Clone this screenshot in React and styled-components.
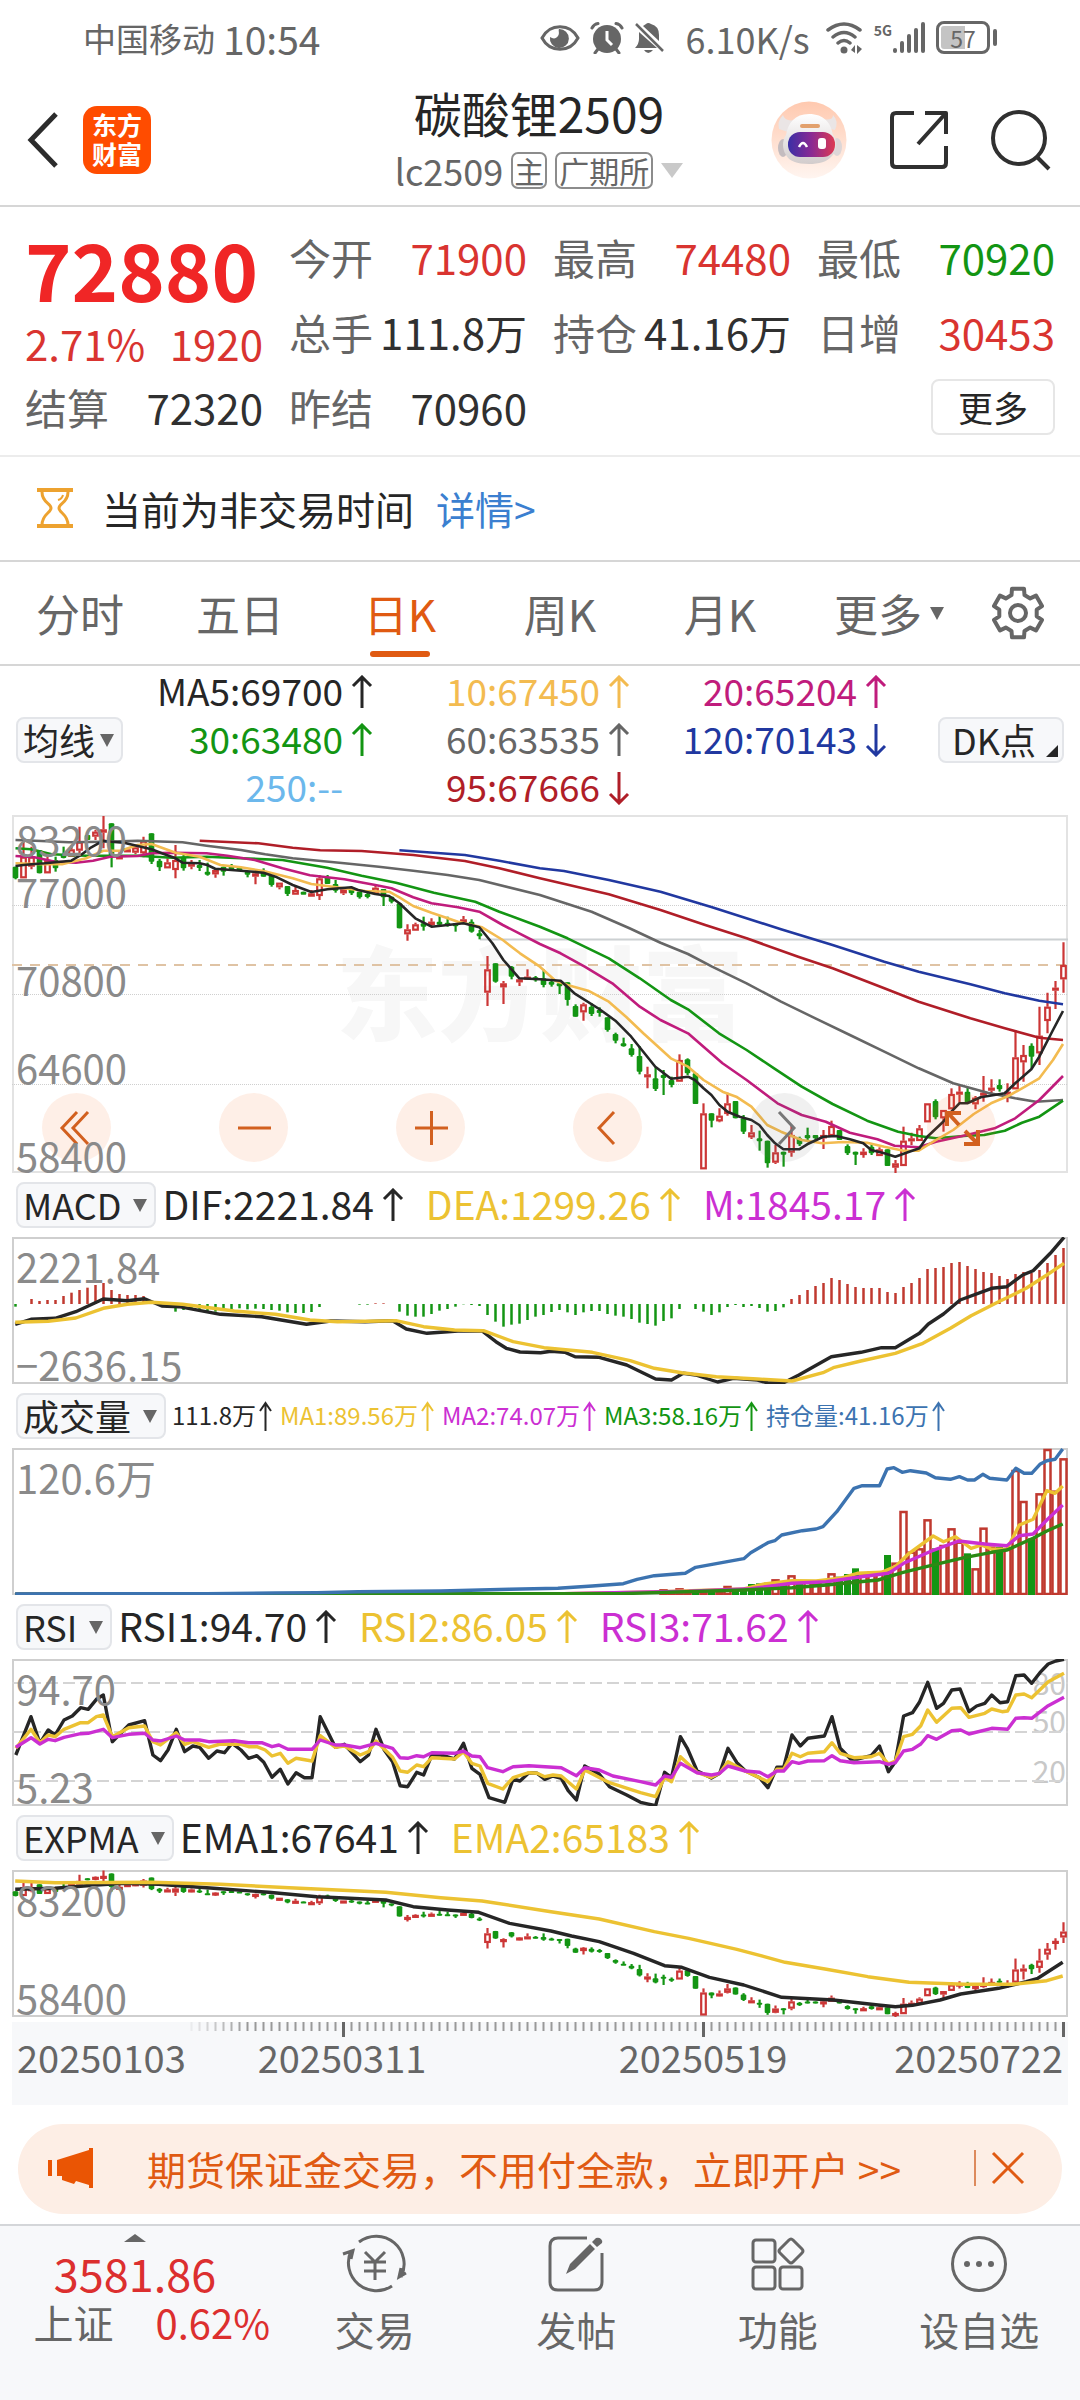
import React from "react";
import styled, { createGlobalStyle, css } from "styled-components";

const c = {
  ink: "#262626",
  grey: "#666666",
  axis: "#8a8a8a",
  red: "#d93430",
  green: "#139513",
  orange: "#e05a12",
  yellow: "#f3bb50",
  gold: "#ecc232",
  magenta: "#c01c7c",
  violet: "#cb2fd2",
  blue: "#2138a0",
  steel: "#3c73b0",
  crimson: "#b01e28",
  sky: "#6cb8ec",
  line: "#d6d6d6",
  panel: "#f7f8fa",
};

const Global = createGlobalStyle`
  *, *::before, *::after { box-sizing: border-box; }
  body { margin: 0; background: #fff; }
  body, button, select {
    font-family: "Noto Sans CJK SC", "Noto Sans", sans-serif;
    color: ${c.ink};
  }
  button, select { border: 0; padding: 0; margin: 0; background: none; font-weight: 400; }
  svg { display: block; flex: none; }
  p, h1, ul { margin: 0; padding: 0; font-weight: 400; list-style: none; }
`;

/* ---------- market data, in chart grid units ---------- */

// direction, body top, body bottom, high, low
const candles = `g170,205,170,208 r140,205,90,205 r140,170,110,178 g120,190,120,190 r150,190,135,190 g150,175,140,185
g135,140,110,145 r118,140,105,140 r95,122,50,130 g75,90,75,90 r65,80,60,90 r58,68,18,115 g40,140,40,172 r138,148,120,148
r118,125,118,125 r112,128,112,133 r92,130,80,142 g70,155,70,162 g152,172,147,183 r157,175,145,175 r150,180,105,205
g140,175,130,182 r157,170,150,178 g165,170,150,183 g185,188,158,197 r180,193,175,203 g170,185,170,197 g168,178,162,178
g172,182,172,182 g185,192,185,202 r190,200,188,223 g185,200,175,200 g195,225,195,230 r218,232,218,238 g228,252,228,258
r240,254,225,254 g245,252,245,252 r250,260,240,260 r205,258,195,270 g202,222,195,222 g222,242,210,248 r238,250,238,255
g238,250,230,255 g245,262,245,266 g252,260,240,265 r233,252,228,252 g237,262,237,288 g260,275,260,280 g280,355,280,355
r358,373,343,392 r343,362,338,362 g340,350,320,362 r335,345,325,350 g335,340,315,348 g338,340,320,350 g340,343,340,365
r328,335,318,340 g335,365,328,368 g370,373,360,388 r478,548,438,588 g460,515,460,518 r520,532,513,582 g470,500,468,508
r508,512,505,528 r500,505,478,505 g502,510,498,515 g505,525,478,532 g515,520,510,530 g520,524,520,552 g517,570,517,587
g588,620,583,620 r583,607,578,632 g590,612,580,618 g600,608,592,620 g622,660,622,665 g672,692,668,700 g700,705,683,710
g715,735,702,740 g738,785,708,793 r793,797,770,835 g805,837,772,843 g795,800,780,855 g810,825,800,832 r750,815,733,815
g748,790,745,795 g790,882,790,882 r910,1078,880,1078 g910,932,910,952 r917,934,895,937 r880,912,848,917 g873,925,873,925
g925,965,915,972 r967,982,945,987 g985,992,962,1022 g992,1060,992,1073 r1027,1058,1005,1062 g1025,1030,1025,1070
r975,1028,945,1040 g985,1003,980,1008 g975,985,953,990 g975,985,975,990 r975,985,960,1017 r948,978,932,978 g960,990,960,990
g1008,1030,1003,1035 g1025,1030,1025,1065 r1025,1035,1015,1043 g1010,1030,1000,1035 r1018,1038,1012,1038 g1018,1068,1018,1068
r1060,1073,1050,1090 r992,1068,950,1068 r985,992,968,1005 r955,993,945,993 r880,937,880,937 g873,922,868,928 r900,925,900,965
r852,898,835,898 r845,852,828,880 g845,878,832,878 r863,883,858,898 r848,855,798,875 r833,840,808,855 g825,838,808,845
r845,850,820,877 r742,838,662,838 r735,757,705,815 g707,740,700,775 r677,730,590,765 r590,633,548,670 r533,540,513,597
r465,508,397,548`
  .split(/\s+/)
  .map((s) => {
    const [top, bottom, high, low] = s.slice(1).split(",").map((n) => Number(n) / 3 - 5);
    return { up: s[0] === "r", top, bottom, high, low };
  });

const averages = [
  [c.blue, "1160,121 1350,135 1450,152 1568,175 1638,183 1768,210 1918,245 2068,292 2268,358 2418,405 2568,455 2668,485 2818,523 2918,550 3018,572 3087,583"],
  [c.crimson, "580,92 750,100 850,113 930,121 1050,123 1200,135 1350,153 1450,175 1568,205 1768,253 1918,300 2048,345 2168,385 2318,440 2418,475 2568,535 2668,575 2818,625 2918,655 3018,683 3087,690"],
  [c.grey, "45,90 120,93 200,97 300,95 400,92 530,97 600,107 700,120 770,133 850,145 1000,160 1100,170 1200,182 1300,195 1392,210 1568,255 1718,305 1828,355 1918,398 1998,432 2068,470 2168,520 2268,575 2368,625 2468,675 2568,725 2668,775 2768,820 2868,848 2948,865 3008,875 3087,870"],
  [c.green, "45,115 90,118 150,133 250,137 400,137 500,143 600,140 700,145 820,150 950,173 1050,197 1150,218 1260,248 1380,275 1450,305 1568,350 1648,385 1768,445 1858,505 1948,570 1998,598 2088,670 2168,720 2248,775 2328,830 2418,882 2518,932 2608,965 2668,978 2718,985 2808,977 2858,975 2918,962 2968,938 3018,920 3087,872"],
  [c.magenta, "45,138 100,142 160,155 220,158 270,152 320,140 400,138 440,130 500,128 600,130 660,137 740,150 820,175 900,196 1000,208 1090,225 1137,235 1200,262 1253,280 1330,292 1392,305 1460,345 1568,402 1628,430 1698,470 1778,520 1858,590 1918,630 1998,670 2098,760 2168,810 2258,880 2328,915 2398,935 2468,968 2548,988 2598,1007 2668,1012 2718,995 2808,975 2888,955 2948,925 3018,870 3087,798"],
  [c.yellow, "45,160 130,163 180,163 250,145 300,122 350,122 400,105 440,102 480,117 510,128 580,140 640,165 700,172 765,183 850,205 904,222 1000,235 1060,243 1130,245 1160,262 1200,288 1253,308 1330,335 1400,352 1460,390 1510,430 1568,470 1613,512 1648,525 1708,542 1768,575 1818,620 1868,670 1948,745 1998,770 2043,810 2098,845 2138,860 2182,890 2228,945 2268,965 2328,990 2388,1000 2448,996 2518,998 2568,1010 2624,1022 2668,1022 2718,990 2768,960 2828,912 2878,880 2928,858 2968,835 3018,805 3058,750 3087,702"],
  [c.ink, "45,168 68,165 91,163 130,160 207,152 235,135 265,112 300,92 323,95 360,98 400,108 440,118 470,130 510,145 530,158 580,160 602,165 625,176 700,182 765,188 800,200 850,225 904,246 951,238 1020,232 1040,240 1090,252 1130,258 1160,280 1206,325 1253,350 1300,345 1346,340 1392,352 1430,400 1462,450 1508,505 1568,508 1628,512 1668,550 1740,597 1787,632 1833,680 1903,770 1949,806 1998,800 2018,810 2043,835 2066,855 2089,885 2113,905 2148,920 2182,930 2205,945 2228,975 2251,1000 2275,1018 2321,1018 2344,1003 2391,980 2428,978 2468,988 2507,1000 2530,1020 2568,1030 2600,1040 2628,1030 2670,1015 2693,980 2739,935 2763,905 2786,880 2809,880 2848,862 2918,850 2948,820 2995,778 3018,740 3058,660 3087,603"],
];

const macdBars = "380 372 357 363 360 360 348 338 330 323 315 309 330 342 345 345 348 365 378 383 395 390 390 390 395 395 393 387 385 388 386 387 390 392 397 399 399 396 381 372 372 372 372 374 374 370 370 372 395 407 410 410 402 392 387 380 373 375 378 405 425 440 434 431 420 410 405 396 390 397 405 397 393 393 402 407 410 417 428 432 437 423 415 387 372 387 395 405 397 381 375 381 378 384 395 393 382 357 345 330 318 309 294 300 312 321 324 324 324 336 339 321 309 294 267 264 261 249 246 258 267 276 279 288 297 282 276 279 270 249 225 204"
  .split(" ")
  .map(Number);

const macdLines = [
  [c.ink, "22,433 45,418 80,415 110,395 128,378 150,357 185,362 210,356 235,378 260,380 320,403 380,410 445,433 480,423 530,425 570,422 590,447 620,460 670,452 700,453 720,485 735,505 755,516 785,518 800,514 820,517 835,530 870,532 910,555 952,597 975,600 992,580 1010,585 1042,606 1065,595 1100,600 1115,609 1138,608 1160,585 1207,530 1250,517 1280,503 1300,503 1335,460 1348,432 1370,402 1394,360 1440,325 1462,320 1485,285 1500,272 1525,220 1545,172"],
  [c.gold, "22,427 70,424 110,414 150,385 185,373 220,367 265,373 340,393 400,403 450,420 490,425 575,422 615,440 660,450 702,452 745,485 790,503 860,517 915,542 950,565 990,578 1040,590 1100,597 1150,603 1195,578 1210,563 1250,543 1300,520 1340,490 1380,445 1410,407 1450,365 1490,325 1520,285 1545,250"],
];

const volumeBars = "r478 r485 r475 r488 g487 r485 g485 r485 r468 g482 g480 g462 g460 g458 r448 g460 r436 g458 r455 r460 r452 r430 g440 g432 g415 r430 r425 r427 g375 r398 r243 r365 r355 r268 g355 r345 r295 r335 g370 r415 r293 r350 g350 r357 r120 r213 g325 r190 r57 r182 r85"
  .split(" ")
  .map((s) => ({ up: s[0] === "r", top: Number(s.slice(1)) / 3 - 18 }));

const volumeLines = [
  [c.gold, "22,493 800,492 950,486 1080,477 1110,462 1150,452 1185,453 1220,445 1245,430 1280,427 1300,410 1320,370 1355,318 1370,335 1387,320 1410,355 1425,345 1440,358 1462,358 1480,285 1500,268 1520,182 1532,190 1543,168"],
  [c.violet, "22,493 800,492 1000,484 1090,476 1150,460 1200,455 1250,440 1290,430 1312,400 1350,365 1392,333 1430,342 1462,347 1480,317 1500,312 1520,270 1543,225"],
  ["#2c8a14", "22,493 900,491 1080,480 1150,473 1200,465 1275,450 1310,428 1345,410 1400,383 1440,367 1462,360 1500,325 1520,303 1543,282"],
  [c.steel, "22,492 150,491 300,491 400,489 460,488 520,485 640,483 740,478 810,475 860,468 905,461 925,448 950,437 995,430 1010,412 1080,386 1090,368 1115,338 1125,332 1135,315 1165,302 1185,297 1195,290 1215,245 1240,175 1252,167 1277,167 1288,117 1298,113 1310,127 1322,122 1345,129 1358,143 1380,148 1393,140 1405,150 1415,150 1427,133 1437,145 1462,150 1475,115 1487,130 1498,130 1510,103 1520,92 1532,88 1543,57"],
];

const rsiLines = [
  [c.ink, "23,345 45,230 58,310 70,270 80,285 93,240 105,228 117,203 128,208 140,178 150,165 163,305 187,255 210,242 222,345 233,362 244,330 256,268 268,335 280,318 290,322 303,355 315,333 326,338 337,310 350,330 361,355 373,347 383,367 395,412 407,388 418,432 430,398 442,413 453,413 465,230 487,322 500,313 523,365 535,345 546,268 558,330 570,365 581,437 592,440 605,397 615,405 627,345 640,345 660,357 673,310 685,385 697,403 710,473 733,487 745,417 755,423 768,398 780,400 791,418 803,408 815,415 825,452 837,480 849,378 870,402 885,440 910,465 930,487 952,497 965,397 975,413 988,290 998,325 1012,392 1033,414 1045,400 1057,325 1070,368 1082,392 1103,413 1115,443 1128,382 1138,382 1150,285 1162,318 1173,295 1197,288 1208,230 1220,325 1235,357 1245,357 1265,347 1277,318 1290,395 1300,365 1312,228 1325,218 1335,187 1347,127 1360,205 1370,190 1382,150 1394,147 1407,215 1418,198 1430,190 1440,165 1452,188 1463,185 1475,107 1487,105 1498,130 1510,98 1522,72 1533,63 1545,58"],
  [c.gold, "23,325 45,268 58,308 70,285 80,290 93,268 117,248 128,248 140,230 150,225 163,290 187,263 210,258 222,305 233,315 256,278 268,313 280,305 303,322 320,312 350,313 361,320 373,320 385,330 395,348 407,340 418,370 430,355 453,363 465,287 487,322 500,318 523,345 535,335 546,303 570,352 581,393 592,397 605,375 615,380 627,353 660,357 673,335 685,370 697,378 708,430 730,447 745,413 768,398 780,400 791,410 803,405 815,408 837,447 849,390 885,428 930,458 952,470 965,412 975,425 988,350 1012,397 1033,412 1045,400 1057,365 1082,393 1115,425 1128,388 1138,388 1150,340 1162,350 1173,340 1197,335 1208,308 1220,340 1240,353 1265,350 1277,340 1290,372 1300,363 1312,290 1325,283 1337,257 1347,210 1360,247 1382,205 1395,203 1407,232 1430,220 1440,207 1455,215 1463,213 1475,165 1487,162 1498,173 1522,125 1545,100"],
  [c.violet, "23,322 45,293 58,312 70,298 80,302 93,292 117,281 128,280 150,268 163,293 187,283 210,280 222,300 233,303 256,288 268,300 290,300 303,305 340,302 361,308 380,308 395,320 405,315 418,328 453,328 465,300 487,315 500,315 523,323 546,310 570,325 581,353 592,355 605,347 615,350 627,338 660,340 673,333 685,348 697,350 708,383 730,395 745,380 768,377 815,383 837,407 849,383 870,390 890,408 930,425 952,435 965,408 975,412 988,370 1012,398 1033,405 1045,400 1057,378 1082,393 1103,397 1115,410 1128,393 1138,393 1150,365 1160,370 1173,363 1197,362 1208,347 1220,362 1240,368 1277,365 1290,373 1300,368 1312,333 1325,328 1337,312 1347,287 1360,298 1382,272 1395,270 1407,282 1440,265 1463,268 1475,235 1487,233 1498,235 1522,197 1545,172"],
];

const emaLines = [
  [c.ink, "22,118 80,115 140,105 180,100 230,103 300,113 390,127 460,140 500,144 560,150 600,170 650,180 695,187 740,220 800,243 830,258 870,275 920,310 965,347 990,352 1030,382 1080,405 1135,442 1210,450 1275,465 1300,470 1325,466 1365,450 1395,432 1450,415 1490,395 1507,385 1543,337"],
  [c.gold, "22,93 80,98 220,97 320,103 420,113 560,127 640,143 700,153 800,185 870,207 950,245 1000,265 1070,298 1140,337 1200,358 1260,380 1320,397 1400,403 1470,403 1520,392 1543,378"],
];

const barX = (i) => 3.5 + 8 * i;

const project = (points, scaleX, top) =>
  points
    .split(" ")
    .map((p) => {
      const [x, y] = p.split(",").map(Number);
      return `${(x / scaleX - 12).toFixed(1)},${(y / 3 - top).toFixed(1)}`;
    })
    .join(" ");

/* ---------- chart drawings ---------- */

const ChartSvg = styled.svg`
  width: 100%;
  height: 100%;
  overflow: hidden;
`;

function Lines({ lines, scaleX = 1.452, top, width = 3.4 }) {
  return lines.map(([colour, points]) => (
    <polyline
      key={colour}
      points={project(points, scaleX, top)}
      fill="none"
      stroke={colour}
      strokeWidth={width}
      strokeLinejoin="round"
    />
  ));
}

function Candles({ ratio = 1 }) {
  const minBody = ratio === 1 ? 3 : 2;
  return candles.map((k, i) => {
    const x = barX(i);
    const y = k.top * ratio;
    const h = Math.max(minBody, (k.bottom - k.top) * ratio);
    const high = k.high * ratio;
    const low = k.low * ratio;
    return k.up ? (
      <g key={i} stroke="#cc3636" strokeWidth="2.2" fill="none">
        <path d={`M${x} ${high}V${y}M${x} ${y + h}V${Math.max(low, y + h)}`} />
        <rect x={x - 2.3} y={y + 1} width="4.6" height={Math.max(1, h - 2)} />
      </g>
    ) : (
      <g key={i} fill={c.green}>
        <rect x={x - 1} y={high} width="2.200" height={Math.max(1, low - high)} />
        <rect x={x - 2.8} y={y} width="5.6" height={h} rx="1" />
      </g>
    );
  });
}

function PriceChart() {
  return (
    <ChartSvg viewBox="0 0 1056 358" preserveAspectRatio="none" aria-hidden="true">
      {[90.5, 179.5, 269.5].map((y) => (
        <path key={y} d={`M0 ${y}H1056`} stroke="#cfcfcf" strokeDasharray="1 1" />
      ))}
      <path d="M468 124.5H1056" stroke="#ccd0d2" strokeWidth="2" />
      <path d="M0 150H1056" stroke="#dfc3a4" strokeWidth="2" strokeDasharray="10 8" />
      <Candles />
      <Lines lines={averages} scaleX={2.904} top={5} width={2.6} />
    </ChartSvg>
  );
}

function MacdChart() {
  return (
    <ChartSvg viewBox="0 0 1056 147" preserveAspectRatio="none" aria-hidden="true">
      {macdBars.map((v, i) => (
        <path
          key={i}
          d={`M${barX(i)} 67V${v / 3 - 57}`}
          stroke={v < 372 ? "#c0392f" : c.green}
          strokeWidth="2.500"
        />
      ))}
      <Lines lines={macdLines} top={57} />
    </ChartSvg>
  );
}

function VolumeChart() {
  return (
    <ChartSvg viewBox="0 0 1056 147" preserveAspectRatio="none" aria-hidden="true">
      {volumeBars.map((b, i) => {
        const x = barX(i + 81);
        return b.up ? (
          <rect key={i} x={x - 3} y={b.top + 1} width="6" height={Math.max(1, 145 - b.top)} fill="#fff" stroke="#c0392f" strokeWidth="2.500" />
        ) : (
          <rect key={i} x={x - 3.5} y={b.top} width="7" height={147 - b.top} fill={c.green} />
        );
      })}
      <Lines lines={volumeLines} top={18} />
    </ChartSvg>
  );
}

function RsiChart() {
  return (
    <ChartSvg viewBox="0 0 1056 147" preserveAspectRatio="none" aria-hidden="true">
      {[24, 73, 122].map((y) => (
        <path key={y} d={`M0 ${y}H1056`} stroke="#d4d4d4" strokeWidth="2" strokeDasharray="12 5" />
      ))}
      <Lines lines={rsiLines} top={19} />
    </ChartSvg>
  );
}

function ExpmaChart() {
  return (
    <ChartSvg viewBox="0 0 1056 147" preserveAspectRatio="none" aria-hidden="true">
      <Candles ratio={147 / 358} />
      <Lines lines={emaLines} top={20} />
    </ChartSvg>
  );
}

function Ticks() {
  return (
    <TickSvg viewBox="0 0 1056 15" preserveAspectRatio="none" aria-hidden="true">
      {Array.from({ length: 110 }, (_, n) => {
        const i = n + 22;
        const long = i === 41 || i === 86 || i === 131;
        return (
          <path
            key={i}
            d={`M${barX(i)} 0V${long ? 15 : 9}`}
            stroke={long ? c.grey : "#999"}
            strokeWidth={long ? 3 : 2}
            opacity={Math.min(1, (n + 1) / 8)}
          />
        );
      })}
    </TickSvg>
  );
}

/* ---------- icons ---------- */

const Arrow = ({ down, small }) => (
  <svg
    width={small ? 13 : 22}
    height={small ? 30 : 34}
    viewBox={small ? "0 0 13 30" : "0 0 22 34"}
    fill="none"
    stroke="currentColor"
    strokeWidth={small ? 2 : 3}
    aria-hidden="true"
  >
    {small ? (
      <path d="M6.500 30V2M1 10L6.500 2L12 10" />
    ) : (
      <path d={down ? "M11 1V32M2 23L11 32L20 23" : "M11 33V2M2 11L11 2L20 11"} />
    )}
  </svg>
);

const Triangle = ({ w = 14, h = 13, colour = c.grey }) => (
  <svg width={w} height={h} viewBox="0 0 14 13" preserveAspectRatio="none" aria-hidden="true">
    <path d="M0 0H14L7 13Z" fill={colour} />
  </svg>
);

const EyeIcon = () => (
  <svg width="40" height="28" viewBox="0 0 40 28" aria-hidden="true">
    <path d="M2 14C10-1 30-1 38 14C30 29 10 29 2 14Z" fill="none" stroke={c.grey} strokeWidth="3" />
    <path d="M19 5A9.500 9.500 0 1 1 10 13C13 15 16 15 18 12C20 9 18 7 19 5Z" fill={c.grey} />
  </svg>
);

const AlarmIcon = () => (
  <svg width="34" height="32" viewBox="0 0 34 32" aria-hidden="true">
    <circle cx="17" cy="17" r="14" fill={c.grey} />
    <path d="M2 6Q4 2 8 1.500M32 6Q30 2 26 1.500M5 31L8 27M29 31L26 27" fill="none" stroke={c.grey} strokeWidth="3" strokeLinecap="round" />
    <path d="M17 9V18L22 23" fill="none" stroke="#fff" strokeWidth="3" />
  </svg>
);

const BellOffIcon = () => (
  <svg width="30" height="32" viewBox="0 0 30 32" aria-hidden="true">
    <path d="M9 4L12 2Q14 0 17 2Q25 4 25 13V19ZM5 10L23 26H1Q5 22 5 17Z" fill={c.grey} />
    <path d="M2 2L29 29" stroke={c.grey} strokeWidth="2.500" />
    <path d="M10 28H19Q14 34 10 28Z" fill={c.grey} />
  </svg>
);

const WifiIcon = () => (
  <svg width="38" height="32" viewBox="0 0 38 32" aria-hidden="true">
    <g fill="none" stroke={c.grey} strokeWidth="3.500" strokeLinecap="round">
      <path d="M2 8Q18-4 34 8M7 15Q18 6 29 15M12 21Q18 16 24 21" />
    </g>
    <circle cx="18" cy="28" r="3.500" fill={c.grey} />
    <path d="M25 28L29 23V31ZM36 27L31 23V32Z" fill={c.grey} />
  </svg>
);

const SignalIcon = () => (
  <svg width="34" height="32" viewBox="0 0 34 32" fill={c.grey} aria-hidden="true">
    <rect x="1" y="26" width="4" height="5" rx="2" />
    <rect x="8" y="19" width="4" height="12" rx="2" />
    <rect x="15" y="12" width="4" height="19" rx="2" />
    <rect x="22" y="6" width="4" height="25" rx="2" />
    <rect x="29" y="0" width="4" height="31" rx="2" />
  </svg>
);

const BackIcon = () => (
  <svg width="32" height="56" viewBox="0 0 32 56" fill="none" stroke="#2c2c2c" strokeWidth="5" aria-hidden="true">
    <path d="M29 2L4 28L29 54" />
  </svg>
);

const RobotIcon = () => (
  <svg width="76" height="78" viewBox="0 0 76 78" aria-hidden="true">
    <defs>
      <linearGradient id="halo" x1="0" y1="0" x2="0" y2="1">
        <stop offset="0" stopColor="#ffc9af" />
        <stop offset="1" stopColor="#fff5f0" />
      </linearGradient>
      <linearGradient id="visor" x1="0" y1="0" x2="1" y2="0">
        <stop offset="0" stopColor="#3a2fa6" />
        <stop offset="0.500" stopColor="#8a2a93" />
        <stop offset="1" stopColor="#dd3a52" />
      </linearGradient>
      <linearGradient id="shell" x1="0" y1="0" x2="0" y2="1">
        <stop offset="0" stopColor="#ffffff" />
        <stop offset="1" stopColor="#d2cccc" />
      </linearGradient>
    </defs>
    <ellipse cx="38" cy="39" rx="37.500" ry="38.500" fill="url(#halo)" />
    <ellipse cx="12" cy="47" rx="5" ry="9" fill="#c4bcbf" />
    <ellipse cx="66" cy="46" rx="5" ry="9" fill="#ddd6d7" />
    <path d="M12 14Q6 20 8 28L17 31L24 19Q14 21 12 14ZM62 14Q68 20 64 29L56 27L52 18Q62 20 62 14Z" fill="#eae5e5" />
    <path d="M38 13C53 13 60 22 62 34C67 40 66 50 61 55C56 61 48 63 38 63C26 63 18 60 15 54C11 48 11 40 15 34C17 22 24 13 38 13Z" fill="url(#shell)" />
    <rect x="29" y="23" width="20" height="4" rx="2" fill="#e2a06c" />
    <rect x="17" y="31" width="47" height="25" rx="12" fill="url(#visor)" />
    <path d="M28 46Q32 38 36 46" fill="none" stroke="#fff" strokeWidth="2.500" />
    <rect x="47" y="37" width="8" height="11" rx="3" fill="#fff" />
  </svg>
);

const ShareIcon = () => (
  <svg width="58" height="60" viewBox="0 0 58 60" fill="none" stroke="#303030" strokeWidth="4" strokeLinejoin="round" aria-hidden="true">
    <path d="M24 3H6Q2 3 2 7V53Q2 57 6 57H52Q56 57 56 53V36M35 3H56V24M56 3L28 34" />
  </svg>
);

const SearchIcon = () => (
  <svg width="60" height="62" viewBox="0 0 60 62" fill="none" stroke="#303030" strokeWidth="4" aria-hidden="true">
    <circle cx="28" cy="29" r="26" />
    <path d="M46 48L58 60" />
  </svg>
);

const HourglassIcon = () => (
  <svg width="38" height="40" viewBox="0 0 38 40" fill="none" stroke="#eda22f" aria-hidden="true">
    <path d="M1 2H37M1 38H37" strokeWidth="4" />
    <path d="M6 4C6 15 15 15 15 20C15 25 6 26 6 37M32 4C32 15 23 15 23 20C23 25 32 26 32 37" strokeWidth="3" />
    <path d="M27 7Q26 11 22 12" strokeWidth="2" />
  </svg>
);

const gearPath = Array.from({ length: 6 }, (_, k) => {
  const at = (deg, r) => {
    const a = ((k * 60 - 90 + deg) * Math.PI) / 180;
    return `${(27 + r * Math.cos(a)).toFixed(1)} ${(27 + r * Math.sin(a)).toFixed(1)}`;
  };
  return `${at(-20, 19)}L${at(-14, 25)}L${at(14, 25)}L${at(20, 19)}`;
}).join("L");

const GearIcon = () => (
  <svg width="54" height="54" viewBox="0 0 54 54" fill="none" stroke={c.grey} strokeWidth="4" strokeLinejoin="round" aria-hidden="true">
    <path d={`M${gearPath}Z`} />
    <circle cx="27" cy="27" r="8" />
  </svg>
);

const toolPaths = {
  rewind: "M34 18L19 34L34 50M45 18L30 34L45 50",
  minus: "M18 34H51",
  plus: "M18 34H51M34.500 17V51",
  prev: "M40 18L25 34L40 50",
  next: "M28 18L43 34L28 50",
  expand: "M31 31L20 19M19 32V19H33M37 37L49 49M36 50H50V36",
};

const ToolIcon = ({ name }) => (
  <svg width="68" height="68" viewBox="0 0 68 68" fill="none" stroke="currentColor" strokeWidth={name === "expand" ? 4 : 3} aria-hidden="true">
    <path d={toolPaths[name]} />
  </svg>
);

const HornIcon = () => (
  <svg width="46" height="40" viewBox="0 0 46 40" fill="#ea5504" aria-hidden="true">
    <rect x="0" y="12" width="4" height="16" />
    <path d="M9 12L41 2V0H45V40H41V37L28 33L26 36L14 32V28H9Z" />
  </svg>
);

const CloseIcon = () => (
  <svg width="34" height="34" viewBox="0 0 34 34" stroke={c.orange} strokeWidth="3" aria-hidden="true">
    <path d="M2 2L32 32M32 2L2 32" />
  </svg>
);

const TradeIcon = () => (
  <svg width="66" height="60" viewBox="0 0 66 60" fill="none" stroke={c.grey} strokeWidth="3" aria-hidden="true">
    <path d="M17 8A28 28 0 0 1 59 43M50 52A28 28 0 0 1 9 17M1 20L11 16.500L9 25M64 39L57 43L59 34" />
    <path d="M23 18L33 28L43 18M22 28H44M22 37H44M33 28V46" />
  </svg>
);

const PostIcon = () => (
  <svg width="56" height="56" viewBox="0 0 56 56" fill="none" stroke={c.grey} strokeWidth="3" aria-hidden="true">
    <path d="M39 2H10Q2 2 2 10V46Q2 54 10 54H46Q54 54 54 46V17" />
    <path d="M18 38L22 28L42 8L47 13L27 33ZM44 6L48 2Q51 1 53 3Q55 5 54 7L49 11Z" fill={c.grey} stroke="none" />
  </svg>
);

const FunctionIcon = () => (
  <svg width="54" height="54" viewBox="0 0 54 54" fill="none" stroke={c.grey} strokeWidth="3" strokeLinejoin="round" aria-hidden="true">
    <rect x="2" y="3" width="22" height="22" rx="3" />
    <rect x="2" y="30" width="22" height="22" rx="3" />
    <rect x="29" y="30" width="22" height="22" rx="3" />
    <path d="M38 3Q40 1 42 3L51 12Q53 14 51 16L42 25Q40 27 38 25L29 16Q27 14 29 12Z" />
  </svg>
);

const WatchIcon = () => (
  <svg width="58" height="58" viewBox="0 0 58 58" fill={c.grey} aria-hidden="true">
    <circle cx="29" cy="29" r="26.500" fill="none" stroke={c.grey} strokeWidth="3" />
    <circle cx="17" cy="29" r="3" />
    <circle cx="29" cy="29" r="3" />
    <circle cx="41" cy="29" r="3" />
  </svg>
);

/* ---------- layout ---------- */

const Page = styled.div`
  width: 100%;
  min-height: 100vh;
  display: flex;
  flex-direction: column;
  background: #fff;
`;

const StatusBar = styled.div`
  height: 75px;
  padding: 0 90px 0 83px;
  display: flex;
  align-items: center;
  justify-content: space-between;
  color: ${c.grey};
`;

const StatusGroup = styled.div`
  display: flex;
  align-items: center;
  gap: ${(p) => p.$gap}px;
`;

const Carrier = styled.span`
  font-size: 33px;
  line-height: 40px;
`;

const Clock = styled.time`
  font-size: 39px;
  line-height: 40px;
`;

const Speed = styled.span`
  font-size: 36px;
  line-height: 40px;
  padding: 0 6px 0 12px;
`;

const Cell = styled.div`
  display: flex;
  align-items: flex-start;
`;

const CellTag = styled.span`
  font-size: 14px;
  line-height: 16px;
  font-weight: 700;
`;

const Battery = styled.div`
  width: 54px;
  height: 33px;
  border: 3px solid ${c.grey};
  border-radius: 8px;
  display: grid;
  place-items: center;
  font-size: 23px;
  line-height: 25px;
  background: linear-gradient(90deg, #c4c4c4 55%, #fff 55%) content-box;
  padding: 2px;
  position: relative;

  &::after {
    content: "";
    position: absolute;
    right: -10px;
    top: 5px;
    width: 4px;
    height: 17px;
    border-radius: 2px;
    background: ${c.grey};
  }
`;

const Header = styled.header`
  height: 132px;
  padding: 0 29px 0 27px;
  display: grid;
  grid-template-columns: 1fr auto 1fr;
  align-items: center;
  border-bottom: 2px solid ${c.line};
`;

const HeaderSide = styled.div`
  display: flex;
  align-items: center;
  justify-content: ${(p) => (p.$end ? "flex-end" : "flex-start")};
  gap: ${(p) => (p.$end ? 43 : 24)}px;
`;

const IconButton = styled.button`
  display: grid;
  place-items: center;
  cursor: pointer;
`;

const Logo = styled.div`
  width: 68px;
  height: 68px;
  padding: 4px 9px 6px;
  border-radius: 14px;
  background: #ff4c00;
  color: #fff;
  font-size: 25px;
  line-height: 29px;
  font-weight: 700;
`;

const TitleBlock = styled.div`
  display: flex;
  flex-direction: column;
  align-items: center;
  gap: 4px;
  padding-bottom: 4px;
`;

const Title = styled.h1`
  font-size: 48px;
  line-height: 60px;
`;

const ContractButton = styled.button`
  display: flex;
  align-items: center;
  gap: 8px;
  color: ${c.grey};
  font-size: 36px;
  line-height: 48px;
`;

const Tag = styled.span`
  border: 2px solid #8c8c8c;
  border-radius: 7px;
  padding: 0 ${(p) => (p.$wide ? 2 : 1)}px;
  font-size: 30px;
  line-height: 33px;
`;

const Quote = styled.section`
  height: 250px;
  padding: 12px 25px 11px;
  display: grid;
  grid-template-columns: repeat(4, 1fr);
  grid-template-rows: repeat(3, 75px);
  column-gap: 26px;
  border-bottom: 2px solid #ececec;
`;

const PriceBlock = styled.div`
  grid-row: span 2;
  color: ${c.red};
`;

const Price = styled.p`
  font-size: 79px;
  line-height: 98px;
  font-weight: 700;
  color: #f02626;
`;

const Change = styled.p`
  display: flex;
  justify-content: space-between;
  font-size: 42px;
  line-height: 52px;
`;

const Field = styled.div`
  display: flex;
  align-items: center;
  justify-content: space-between;
  font-size: 42px;
  line-height: 50px;
  white-space: nowrap;
  color: ${(p) => p.$colour || "#303030"};
`;

const FieldName = styled.span`
  color: ${c.grey};
`;

const MoreButton = styled.button`
  grid-column: 4;
  justify-self: end;
  align-self: center;
  width: 124px;
  height: 56px;
  border: 2px solid #e6e6e6;
  border-radius: 8px;
  font-size: 35px;
  line-height: 48px;
`;

const Notice = styled.section`
  height: 105px;
  padding: 0 36px 2px;
  display: flex;
  align-items: center;
  font-size: 39px;
  line-height: 48px;
  border-bottom: 2px solid ${c.line};
`;

const NoticeText = styled.p`
  margin: 0 22px 0 28px;
`;

const NoticeLink = styled.a`
  color: #3b7fd0;
  text-decoration: none;
`;

const Tabs = styled.nav`
  height: 104px;
  padding-right: 22px;
  display: grid;
  grid-template-columns: repeat(5, 160fr) 178fr 80fr;
  border-bottom: 2px solid ${c.line};
`;

const Tab = styled.button`
  display: flex;
  align-items: center;
  justify-content: center;
  gap: 8px;
  font-size: 44px;
  line-height: 56px;
  color: ${c.grey};
  position: relative;
  ${(p) =>
    p.$active &&
    css`
      color: ${c.orange};
      &::after {
        content: "";
        position: absolute;
        bottom: 7px;
        width: 60px;
        height: 6px;
        border-radius: 3px;
        background: ${c.orange};
      }
    `}
`;

const Legend = styled.section`
  height: 149px;
  display: grid;
  grid-template-columns: 116px repeat(3, 1fr) 193px;
  grid-template-rows: repeat(3, 48px);
  padding-top: 2px;
`;

const LegendSide = styled.div`
  grid-row: 1 / 4;
  grid-column: ${(p) => (p.$end ? 5 : 1)};
  display: flex;
  align-items: center;
  justify-content: ${(p) => (p.$end ? "flex-end" : "flex-start")};
  padding: 0 16px;
`;

const Reading = styled.span`
  display: flex;
  align-items: center;
  gap: 8px;
  color: ${(p) => p.$colour};
  white-space: nowrap;
`;

const Value = styled.span`
  padding-bottom: 3px;
`;

const Average = styled(Reading)`
  grid-column: ${(p) => p.$column};
  justify-content: flex-end;
  font-size: 37px;
  line-height: 45px;
`;

const ArrowSpace = styled.span`
  width: 22px;
`;

const chip = css`
  display: inline-flex;
  align-items: center;
  flex: none;
  height: 46px;
  border: 2px solid #e3e5e9;
  border-radius: 8px;
  background: ${c.panel};
  font-size: 36px;
  line-height: 40px;
  white-space: nowrap;
`;

const Picker = styled.label`
  ${chip}
  gap: ${(p) => p.$gap || 12}px;
  padding: 0 7px 0 5px;

  select {
    appearance: none;
    field-sizing: content;
    font-size: 36px;
    line-height: 40px;
    height: 42px;
    padding-bottom: 2px;
  }
`;

const DkButton = styled.button`
  ${chip}
  gap: 10px;
  padding: 0 4px 0 12px;

  svg {
    align-self: flex-end;
    margin-bottom: 4px;
  }
`;

const ChartBox = styled.div`
  margin: 0 12px;
  height: ${(p) => (p.$tall ? 358 : 147)}px;
  position: relative;
  box-shadow: inset 0 0 0 2px ${(p) => (p.$tall ? "#e3e3e3" : "#cfcfcf")};
`;

const Watermark = styled.div`
  position: absolute;
  inset: 0;
  padding-bottom: 10px;
  display: grid;
  place-items: center;
  font-size: 102px;
  line-height: 102px;
  font-weight: 900;
  color: #f7f7f7;
`;

const ChartLayer = styled.div`
  position: relative;
  height: 100%;
`;

const PriceScale = styled.div`
  position: absolute;
  inset: 0 auto 0 4px;
  padding-bottom: 4px;
  display: grid;
  grid-template-rows: 38px 52px 1fr 1fr 1fr;
  align-items: end;
  font-size: 40px;
  line-height: 28px;
  color: ${c.axis};
`;

const RangeScale = styled.div`
  position: absolute;
  inset: 0 auto 0 4px;
  padding: 15px 0 6px;
  display: flex;
  flex-direction: column;
  justify-content: space-between;
  font-size: 40px;
  line-height: 28px;
  color: ${c.axis};
`;

const LevelScale = styled.div`
  position: absolute;
  inset: 0 2px 0 auto;
  display: grid;
  grid-template-rows: 38px 38px 50px;
  align-items: end;
  font-size: 30px;
  line-height: 30px;
  color: #c8c8c8;
`;

const Tools = styled.div`
  position: absolute;
  left: 30px;
  right: 72px;
  bottom: 11px;
  display: flex;
  justify-content: space-between;
`;

const Tool = styled.button`
  width: 69px;
  height: 69px;
  border-radius: 50%;
  display: grid;
  place-items: center;
  color: ${(p) => (p.disabled ? "#777" : "#d2601f")};
  background: ${(p) => (p.disabled ? "rgba(110, 110, 110, 0.1)" : "rgba(250, 110, 40, 0.11)")};
`;

const PanelHead = styled.div`
  height: 64px;
  padding: 0 16px;
  display: flex;
  align-items: center;
  gap: 6px;
`;

const Readings = styled.div`
  display: flex;
  align-items: center;
  gap: ${(p) => (p.$small ? 8 : 22)}px;
  font-size: ${(p) => (p.$small ? 24 : 39)}px;
  line-height: 45px;
`;

const PanelReading = styled(Reading)`
  gap: ${(p) => (p.$small ? 3 : 8)}px;
`;

const DateAxis = styled.div`
  margin: 5px 12px 19px;
  height: 83px;
  background: ${c.panel};
`;

const TickSvg = styled.svg`
  width: 100%;
  height: 15px;
`;

const Dates = styled.div`
  display: grid;
  grid-template-columns: 222fr 216fr 73fr 360fr 185fr;
  font-size: 38px;
  line-height: 40px;
  color: ${c.grey};
`;

const DateLabel = styled.time`
  grid-column: ${(p) => p.$column};
  text-align: ${(p) => p.$align || "center"};
  padding: 0 ${(p) => (p.$align ? 5 : 0)}px;
`;

const Banner = styled.aside`
  margin: 0 18px 10px;
  height: 90px;
  padding: 0 37px 2px 30px;
  border-radius: 45px;
  background: #fdeee5;
  display: flex;
  align-items: center;
`;

const BannerLink = styled.a`
  flex: 1;
  margin-left: 53px;
  font-size: 39px;
  line-height: 48px;
  color: ${c.orange};
  text-decoration: none;
  white-space: nowrap;
`;

const BannerClose = styled.button`
  border-left: 2px solid #dd8a5c;
  height: 36px;
  padding-left: 15px;
  display: grid;
  place-items: center;
`;

const BottomBar = styled.nav`
  flex: 1;
  min-height: 176px;
  display: grid;
  grid-template-columns: 274px repeat(4, 1fr);
  align-items: start;
  background: ${c.panel};
  border-top: 2px solid #d4d6d9;
`;

const IndexButton = styled.button`
  padding: 8px 4px 0 0;
  display: flex;
  flex-direction: column;
  align-items: center;
  color: #dc2f2f;
`;

const IndexValue = styled.span`
  margin-top: 5px;
  font-size: 45px;
  line-height: 52px;
`;

const IndexRow = styled.span`
  align-self: flex-end;
  display: flex;
  gap: 42px;
  font-size: 40px;
  line-height: 46px;
`;

const NavButton = styled.button`
  padding-top: 8px;
  display: flex;
  flex-direction: column;
  align-items: center;
  gap: 11px;
  font-size: 40px;
  line-height: 48px;
  color: ${c.grey};
`;

const NavIcon = styled.span`
  height: 60px;
  display: grid;
  place-items: center;
`;

/* ---------- content ---------- */

const fields = [
  ["今开", "71900", c.red],
  ["最高", "74480", c.red],
  ["最低", "70920", c.green],
  ["总手", "111.8万"],
  ["持仓", "41.16万"],
  ["日增", "30453", c.red],
  ["结算", "72320"],
  ["昨结", "70960"],
];

const averageReadings = [
  ["MA5:69700", c.ink, "up", 2],
  ["10:67450", c.yellow, "up", 3],
  ["20:65204", c.magenta, "up", 4],
  ["30:63480", c.green, "up", 2],
  ["60:63535", c.grey, "up", 3],
  ["120:70143", c.blue, "down", 4],
  ["250:--", c.sky, null, 2],
  ["95:67666", c.crimson, "down", 3],
];

const indicators = ["MACD", "成交量", "RSI", "EXPMA"];

const panels = [
  {
    name: "MACD",
    chart: MacdChart,
    scale: ["2221.84", "−2636.15"],
    readings: [["DIF:2221.84", c.ink], ["DEA:1299.26", c.gold], ["M:1845.17", c.violet]],
  },
  {
    name: "成交量",
    small: true,
    chart: VolumeChart,
    scale: ["120.6万"],
    readings: [
      ["111.8万", c.ink],
      ["MA1:89.56万", c.gold],
      ["MA2:74.07万", c.violet],
      ["MA3:58.16万", c.green],
      ["持仓量:41.16万", c.steel],
    ],
  },
  {
    name: "RSI",
    chart: RsiChart,
    scale: ["94.70", "5.23"],
    levels: ["80", "50", "20"],
    readings: [["RSI1:94.70", c.ink], ["RSI2:86.05", c.gold], ["RSI3:71.62", c.violet]],
  },
  {
    name: "EXPMA",
    chart: ExpmaChart,
    scale: ["83200", "58400"],
    readings: [["EMA1:67641", c.ink], ["EMA2:65183", c.gold]],
  },
];

const tools = [
  ["rewind", "快退"],
  ["minus", "缩小"],
  ["plus", "放大"],
  ["prev", "向左"],
  ["next", "向右"],
  ["expand", "全屏"],
];

const navItems = [
  ["交易", TradeIcon],
  ["发帖", PostIcon],
  ["功能", FunctionIcon],
  ["设自选", WatchIcon],
];

function Panel({ name, small, chart: Chart, scale, levels, readings }) {
  return (
    <section>
      <PanelHead>
        <Picker>
          <select aria-label="指标" defaultValue={name}>
            {indicators.map((n) => (
              <option key={n}>{n}</option>
            ))}
          </select>
          <Triangle />
        </Picker>
        <Readings $small={small}>
          {readings.map(([text, colour]) => (
            <PanelReading key={text} $colour={colour} $small={small}>
              <Value>{text}</Value>
              <Arrow small={small} />
            </PanelReading>
          ))}
        </Readings>
      </PanelHead>
      <ChartBox>
        {levels && (
          <LevelScale>
            {levels.map((l) => (
              <span key={l}>{l}</span>
            ))}
          </LevelScale>
        )}
        <ChartLayer>
          <Chart />
        </ChartLayer>
        <RangeScale>
          {scale.map((s) => (
            <span key={s}>{s}</span>
          ))}
        </RangeScale>
      </ChartBox>
    </section>
  );
}

export default function App() {
  return (
    <Page>
      <Global />
      <StatusBar>
        <StatusGroup $gap={8}>
          <Carrier>中国移动</Carrier>
          <Clock>10:54</Clock>
        </StatusGroup>
        <StatusGroup $gap={10}>
          <EyeIcon />
          <AlarmIcon />
          <BellOffIcon />
          <Speed>6.10K/s</Speed>
          <WifiIcon />
          <Cell>
            <CellTag>5G</CellTag>
            <SignalIcon />
          </Cell>
          <Battery>57</Battery>
        </StatusGroup>
      </StatusBar>

      <Header>
        <HeaderSide>
          <IconButton aria-label="返回">
            <BackIcon />
          </IconButton>
          <Logo>东方财富</Logo>
        </HeaderSide>
        <TitleBlock>
          <Title>碳酸锂2509</Title>
          <ContractButton aria-haspopup="listbox">
            lc2509
            <Tag>主</Tag>
            <Tag $wide>广期所</Tag>
            <Triangle w={22} h={15} colour="#c9c9c9" />
          </ContractButton>
        </TitleBlock>
        <HeaderSide $end>
          <IconButton aria-label="智能助手">
            <RobotIcon />
          </IconButton>
          <IconButton aria-label="分享">
            <ShareIcon />
          </IconButton>
          <IconButton aria-label="搜索">
            <SearchIcon />
          </IconButton>
        </HeaderSide>
      </Header>

      <Quote>
        <PriceBlock>
          <Price>72880</Price>
          <Change>
            <span>2.71%</span>
            <span>1920</span>
          </Change>
        </PriceBlock>
        {fields.map(([name, value, colour]) => (
          <Field key={name} $colour={colour}>
            <FieldName>{name}</FieldName>
            <span>{value}</span>
          </Field>
        ))}
        <MoreButton>更多</MoreButton>
      </Quote>

      <Notice>
        <HourglassIcon />
        <NoticeText>当前为非交易时间</NoticeText>
        <NoticeLink href="#detail">详情&gt;</NoticeLink>
      </Notice>

      <Tabs>
        {["分时", "五日", "日K", "周K", "月K"].map((t) => (
          <Tab key={t} $active={t === "日K"}>
            {t}
          </Tab>
        ))}
        <Tab aria-haspopup="menu">
          更多
          <Triangle />
        </Tab>
        <IconButton aria-label="设置">
          <GearIcon />
        </IconButton>
      </Tabs>

      <Legend>
        <LegendSide>
          <Picker $gap={5}>
            <select aria-label="主图指标" defaultValue="均线">
              <option>均线</option>
            </select>
            <Triangle />
          </Picker>
        </LegendSide>
        {averageReadings.map(([text, colour, direction, column]) => (
          <Average key={text} $colour={colour} $column={column}>
            <Value>{text}</Value>
            {direction ? <Arrow down={direction === "down"} /> : <ArrowSpace />}
          </Average>
        ))}
        <LegendSide $end>
          <DkButton>
            <Value>DK点</Value>
            <svg width="12" height="12" viewBox="0 0 12 12" aria-hidden="true">
              <path d="M12 0V12H0Z" fill={c.ink} />
            </svg>
          </DkButton>
        </LegendSide>
      </Legend>

      <ChartBox $tall>
        <Watermark aria-hidden="true">东方财富</Watermark>
        <ChartLayer>
          <PriceChart />
        </ChartLayer>
        <Tools>
          {tools.map(([icon, label]) => (
            <Tool key={icon} aria-label={label} disabled={icon === "next"}>
              <ToolIcon name={icon} />
            </Tool>
          ))}
        </Tools>
        <PriceScale>
          {["83200", "77000", "70800", "64600", "58400"].map((p) => (
            <span key={p}>{p}</span>
          ))}
        </PriceScale>
      </ChartBox>

      {panels.map((p) => (
        <Panel key={p.name} {...p} />
      ))}

      <DateAxis>
        <Ticks />
        <Dates>
          <DateLabel $column={1} $align="left">20250103</DateLabel>
          <DateLabel $column={2}>20250311</DateLabel>
          <DateLabel $column={4}>20250519</DateLabel>
          <DateLabel $column={5} $align="right">20250722</DateLabel>
        </Dates>
      </DateAxis>

      <Banner>
        <HornIcon />
        <BannerLink href="#open">期货保证金交易，不用付全款，立即开户 &gt;&gt;</BannerLink>
        <BannerClose aria-label="关闭">
          <CloseIcon />
        </BannerClose>
      </Banner>

      <BottomBar>
        <IndexButton>
          <svg width="22" height="8" viewBox="0 0 22 8" aria-hidden="true">
            <path d="M11 0L22 8H0Z" fill={c.grey} />
          </svg>
          <IndexValue>3581.86</IndexValue>
          <IndexRow>
            <FieldName>上证</FieldName>
            <span>0.62%</span>
          </IndexRow>
        </IndexButton>
        {navItems.map(([label, Icon]) => (
          <NavButton key={label}>
            <NavIcon>
              <Icon />
            </NavIcon>
            {label}
          </NavButton>
        ))}
      </BottomBar>
    </Page>
  );
}
